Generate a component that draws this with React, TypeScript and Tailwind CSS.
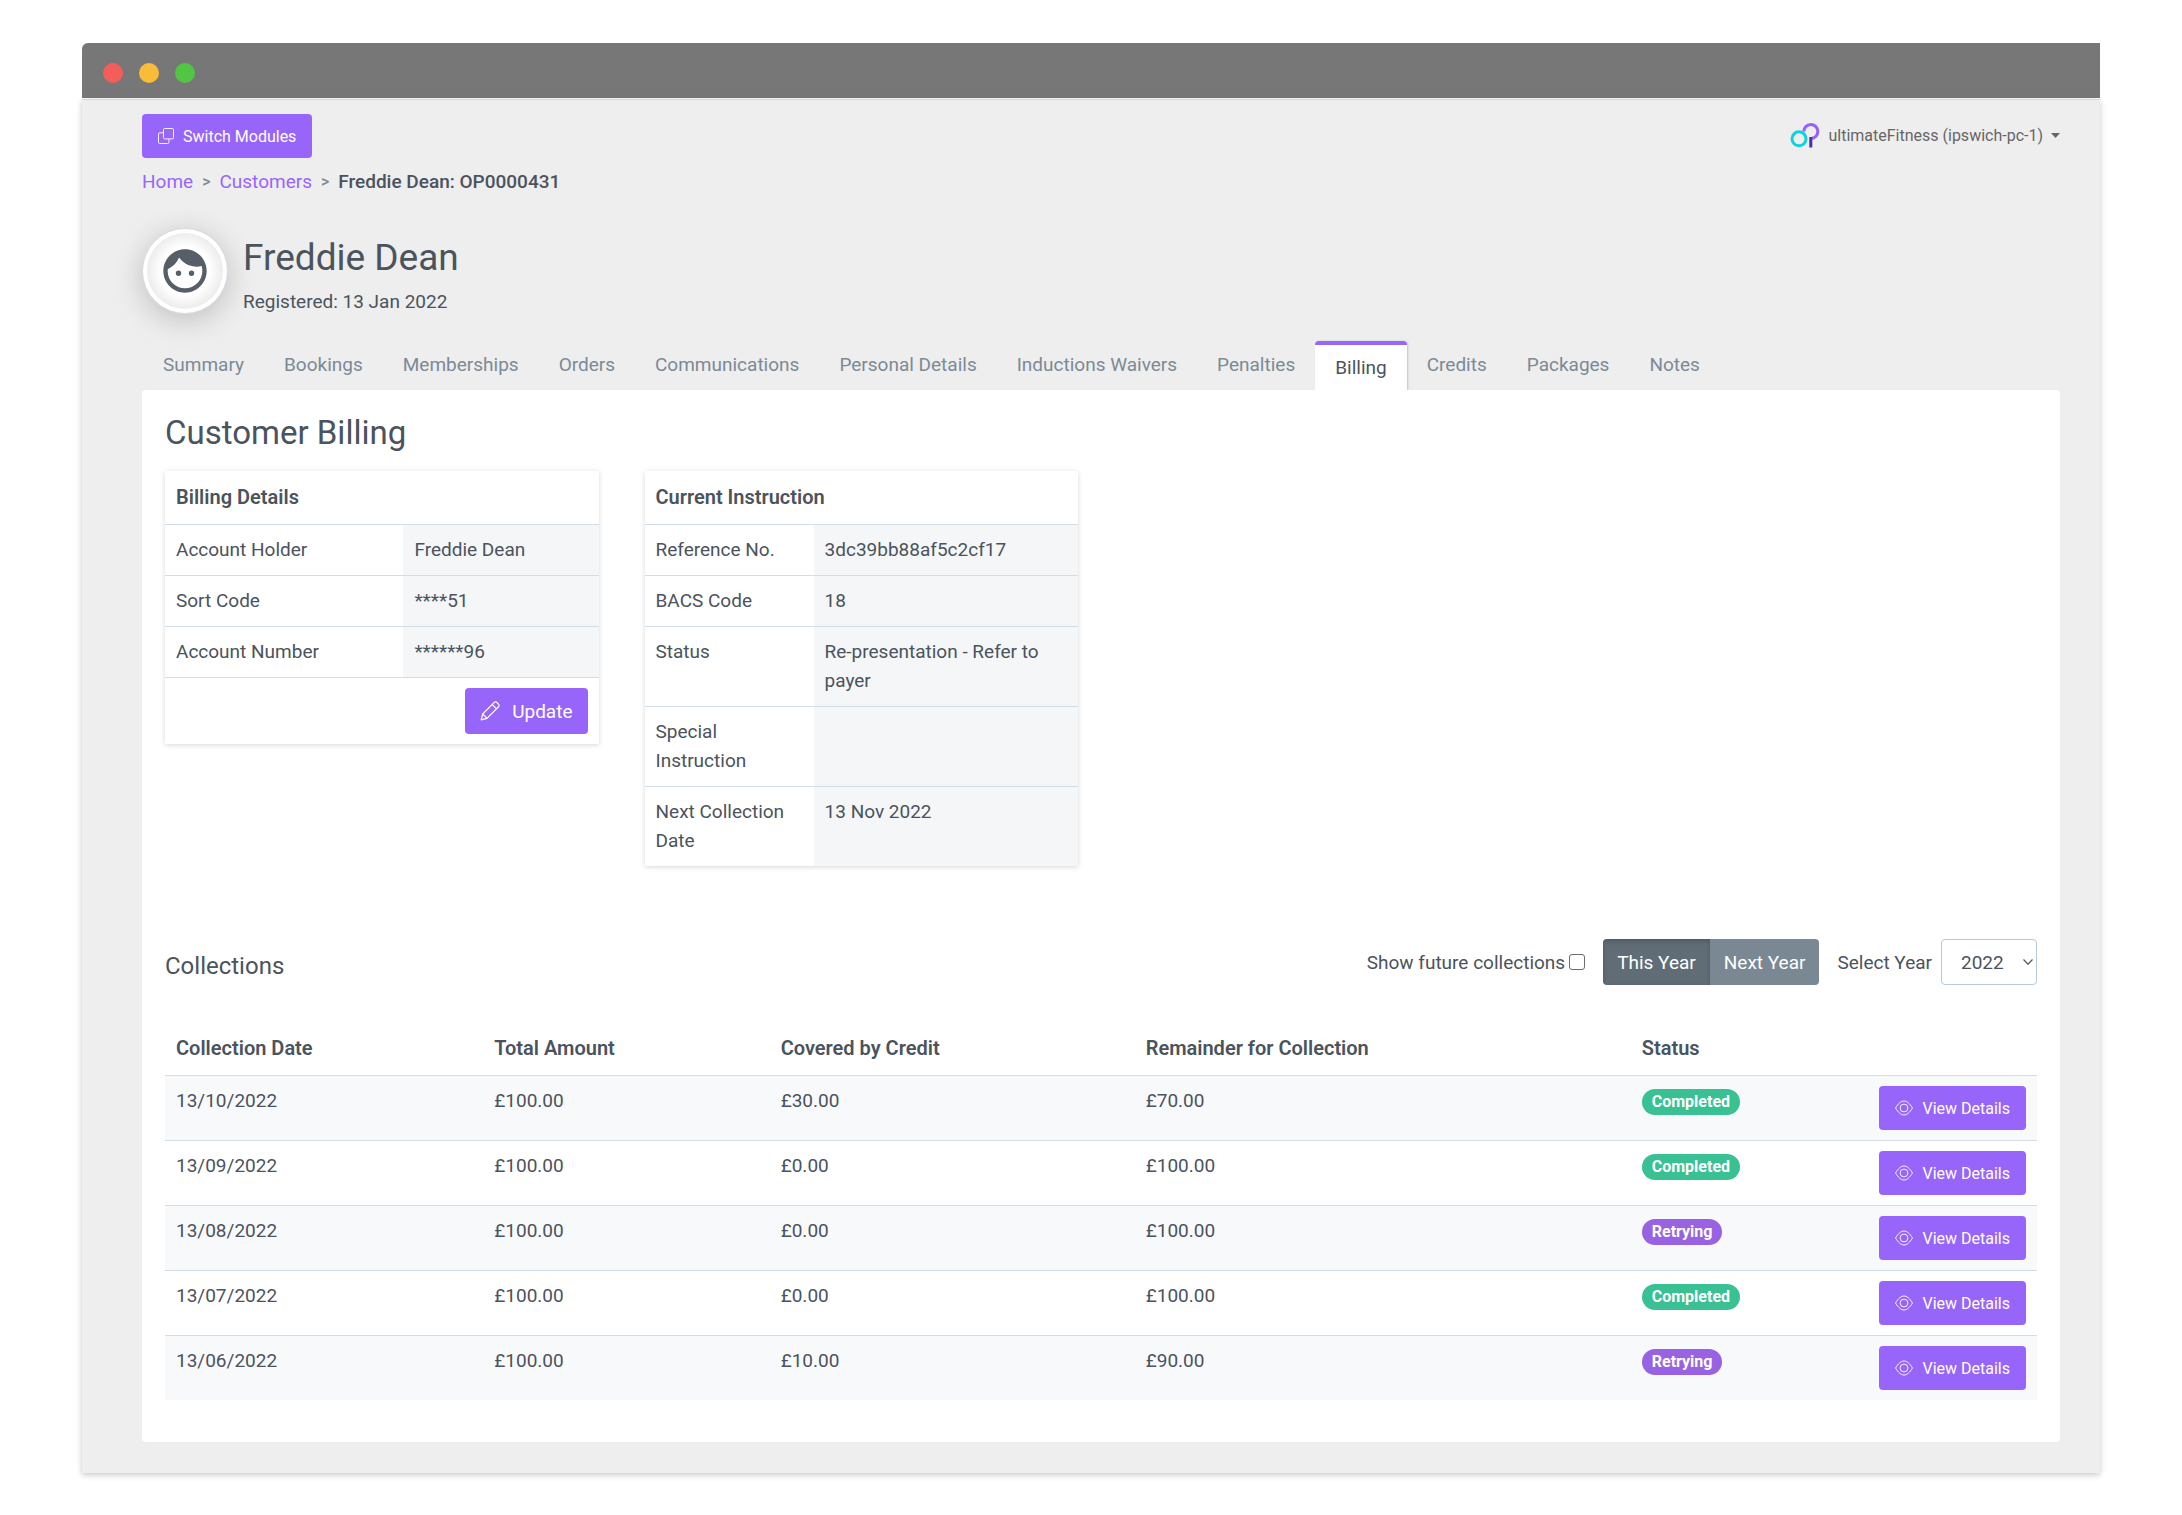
import type { ReactNode } from "react";
import { MdFace } from "react-icons/md";

const tabs = [
  "Summary",
  "Bookings",
  "Memberships",
  "Orders",
  "Communications",
  "Personal Details",
  "Inductions Waivers",
  "Penalties",
  "Billing",
  "Credits",
  "Packages",
  "Notes",
];

const billingDetails = [
  ["Account Holder", "Freddie Dean"],
  ["Sort Code", "****51"],
  ["Account Number", "******96"],
];

const currentInstruction = [
  ["Reference No.", "3dc39bb88af5c2cf17"],
  ["BACS Code", "18"],
  ["Status", "Re-presentation - Refer to payer"],
  ["Special Instruction", ""],
  ["Next Collection Date", "13 Nov 2022"],
];

const collections = [
  { date: "13/10/2022", total: "£100.00", credit: "£30.00", remainder: "£70.00", status: "Completed" },
  { date: "13/09/2022", total: "£100.00", credit: "£0.00", remainder: "£100.00", status: "Completed" },
  { date: "13/08/2022", total: "£100.00", credit: "£0.00", remainder: "£100.00", status: "Retrying" },
  { date: "13/07/2022", total: "£100.00", credit: "£0.00", remainder: "£100.00", status: "Completed" },
  { date: "13/06/2022", total: "£100.00", credit: "£10.00", remainder: "£90.00", status: "Retrying" },
];

function CopyIcon() {
  return (
    <svg viewBox="0 0 16 16" className="size-4" fill="none" stroke="currentColor" strokeWidth="0.9">
      <rect x="5.5" y="0.5" width="10" height="10.4" rx="1.2" />
      <path d="M5.5 4.8H1.7A1.2 1.2 0 0 0 .5 6v8.3a1.2 1.2 0 0 0 1.2 1.2h8a1.2 1.2 0 0 0 1.2-1.2v-3.4" />
    </svg>
  );
}

function PencilIcon() {
  return (
    <svg viewBox="0 0 20 20" className="size-5" fill="none" stroke="currentColor" strokeWidth="1.2" strokeLinejoin="round">
      <path d="M1.2 18.8l1.5-5.8L14 1.7a2.2 2.2 0 0 1 3.1 0l1.2 1.2a2.2 2.2 0 0 1 0 3.1L7 17.3z" />
      <path d="M12.2 3.5l4.3 4.3M2.7 13l4.3 4.3" />
    </svg>
  );
}

function EyeIcon() {
  return (
    <svg viewBox="0 0 18 16" className="h-4 w-[18px]" fill="none" stroke="currentColor" strokeWidth="0.9">
      <path d="M.5 8C3.400 3.400 6 1 9 1s5.600 2.400 8.500 7C14.600 12.600 12 15 9 15S3.400 12.600.5 8z" />
      <circle cx="9" cy="8" r="3.900" />
    </svg>
  );
}

function BrandLogo() {
  return (
    <svg viewBox="0 0 30 25" className="h-[25px] w-[30px]" fill="none">
      <path d="M13.8 8.5a7 7 0 1 1 7.4 7" stroke="#9561fb" strokeWidth="3" />
      <path d="M20.8 14v10.5" stroke="#4a2fa8" strokeWidth="3" />
      <circle cx="9" cy="15.8" r="7" stroke="#0cd3e0" strokeWidth="3" />
    </svg>
  );
}

function DetailTable({
  title,
  rows,
  labelWidth,
  children,
}: {
  title: string;
  rows: string[][];
  labelWidth: string;
  children?: ReactNode;
}) {
  return (
    <table className="w-full table-fixed border-collapse bg-white text-left shadow-[0_1px_5px_rgba(0,0,0,0.16)]">
      <colgroup>
        <col className={labelWidth} />
        <col />
      </colgroup>
      <thead>
        <tr>
          <th colSpan={2} className="px-[11px] py-3 text-[20px] leading-[29px] font-semibold">
            {title}
          </th>
        </tr>
      </thead>
      <tbody>
        {rows.map(([label, value]) => (
          <tr key={label} className="border-t border-[#d3dde6] align-top">
            <th scope="row" className="px-[11px] pt-[10px] pb-[11px] font-normal">
              {label}
            </th>
            <td className="bg-[#f4f6f8] px-[11px] pt-[10px] pb-[11px]">{value}</td>
          </tr>
        ))}
        {children}
      </tbody>
    </table>
  );
}

function StatusBadge({ status }: { status: string }) {
  return (
    <span
      className={`inline-block rounded-full px-[10px] text-[16px] leading-[26px] font-bold text-white ${
        status === "Completed" ? "bg-[#39c093]" : "bg-[#9862e3]"
      }`}
    >
      {status}
    </span>
  );
}

export default function App() {
  return (
    <div className="min-h-screen bg-white px-[82px] pt-[43px] pb-[42px] font-['Roboto','Liberation_Sans',sans-serif] text-[19px] leading-[29px] text-[#4b535d]">
      <div className="flex h-[55px] items-center gap-4 rounded-tl-md bg-[#777] pt-1 pl-[21px]">
        <span className="size-5 rounded-full bg-[#f45e5a]" />
        <span className="size-5 rounded-full bg-[#f9bc39]" />
        <span className="size-5 rounded-full bg-[#51c643]" />
      </div>

      <div className="mt-px border-t border-[#d8d8d8] bg-[#eee] pt-[14px] pr-10 pb-[31px] pl-[60px] shadow-[0_2px_6px_rgba(0,0,0,0.22)]">
        <header className="flex items-start justify-between">
          <button type="button" className="flex h-11 items-center gap-[9px] rounded bg-[#9865fb] px-4 text-[16px] text-white">
            <CopyIcon />
            Switch Modules
          </button>
          <button type="button" className="flex items-center gap-2 pt-[7px] text-[16px] text-[#666]">
            <BrandLogo />
            ultimateFitness (ipswich-pc-1)
            <svg viewBox="0 0 9 5" className="h-[5px] w-[9px]" fill="currentColor">
              <path d="M0 0h9L4.5 5z" />
            </svg>
          </button>
        </header>

        <nav aria-label="Breadcrumb" className="mt-[9px] flex items-center gap-[9px]">
          <a href="#home" className="text-[#9865fb]">Home</a>
          <span className="text-[16px] font-medium text-[#7b8a96]">&gt;</span>
          <a href="#customers" className="text-[#9865fb]">Customers</a>
          <span className="text-[16px] font-medium text-[#7b8a96]">&gt;</span>
          <span className="font-medium">Freddie Dean: OP0000431</span>
        </nav>

        <div className="mt-8 flex items-start gap-[15px]">
          <div className="flex size-[86px] items-center justify-center rounded-full border border-[#d3dde6] bg-white p-1 shadow-[0_6px_30px_rgba(0,0,0,0.2)]">
            <div className="flex size-full items-center justify-center rounded-full bg-radial from-white from-45% to-[#e9e9e9] to-75%">
              <MdFace className="size-[52px] text-[#565e68]" />
            </div>
          </div>
          <div className="pt-2">
            <h1 className="text-[37px] leading-[44px]">Freddie Dean</h1>
            <p className="mt-[7px]">Registered: 13 Jan 2022</p>
          </div>
        </div>

        <nav aria-label="Customer sections" className="mt-[25px] flex h-[49px] items-stretch pl-px">
          {tabs.map((tab) =>
            tab === "Billing" ? (
              <a
                key={tab}
                href="#billing"
                aria-current="page"
                className="rounded-t border-t-4 border-[#9865fb] bg-white px-5 pt-2 shadow-[1px_0_2px_rgba(0,0,0,0.18)]"
              >
                {tab}
              </a>
            ) : (
              <a key={tab} href={`#${tab.toLowerCase().replace(" ", "-")}`} className="px-5 pt-[9px] text-[#7b8a96]">
                {tab}
              </a>
            ),
          )}
        </nav>

        <main className="relative rounded bg-white px-[23px] pt-[23px] pb-[42px]">
          <h2 className="text-[33px] leading-10">Customer Billing</h2>

          <div className="mt-[18px] grid grid-cols-4 items-start gap-x-[46px]">
            <DetailTable title="Billing Details" rows={billingDetails} labelWidth="w-[55%]">
              <tr className="border-t border-[#d3dde6]">
                <td colSpan={2} className="px-[11px] py-[10px]">
                  <button type="button" className="ml-auto flex h-[46px] items-center gap-3 rounded bg-[#9865fb] px-[15px] text-white">
                    <PencilIcon />
                    Update
                  </button>
                </td>
              </tr>
            </DetailTable>
            <DetailTable title="Current Instruction" rows={currentInstruction} labelWidth="w-[39%]" />
          </div>

          <section className="mt-[73px]">
            <div className="flex items-center">
              <h3 className="mr-auto pt-2 text-[24px]">Collections</h3>
              <label className="flex items-center gap-1">
                Show future collections
                <input
                  type="checkbox"
                  className="size-4 appearance-none rounded-[3px] border border-[#6c6c6c] bg-white checked:bg-[#9865fb]"
                />
              </label>
              <div className="ml-[18px] flex h-[46px] overflow-hidden rounded text-white">
                <button type="button" aria-pressed="true" className="bg-[#606d77] px-[14px] shadow-[inset_0_2px_5px_rgba(0,0,0,0.2)]">
                  This Year
                </button>
                <button type="button" aria-pressed="false" className="bg-[#7a8893] px-[14px]">
                  Next Year
                </button>
              </div>
              <label htmlFor="year" className="mr-[9px] ml-[18px]">
                Select Year
              </label>
              <div className="relative">
                <select
                  id="year"
                  defaultValue="2022"
                  className="h-[46px] w-24 appearance-none rounded border border-[#b9c8d5] bg-white pl-[19px]"
                >
                  <option>2022</option>
                  <option>2023</option>
                </select>
                <svg
                  viewBox="0 0 10 6"
                  className="pointer-events-none absolute top-5 right-1 h-[6px] w-[10px]"
                  fill="none"
                  stroke="currentColor"
                  strokeWidth="1.2"
                >
                  <path d="M.5.5L5 5.2 9.5.5" />
                </svg>
              </div>
            </div>

            <table className="mt-[37px] w-full table-fixed border-collapse text-left">
              <thead>
                <tr className="text-[20px]">
                  <th className="w-[17%] px-[11px] py-3 font-semibold">Collection Date</th>
                  <th className="w-[15.3%] px-[11px] py-3 font-semibold">Total Amount</th>
                  <th className="w-[19.5%] px-[11px] py-3 font-semibold">Covered by Credit</th>
                  <th className="w-[26.5%] px-[11px] py-3 font-semibold">Remainder for Collection</th>
                  <th className="px-[11px] py-3 font-semibold">Status</th>
                  <td />
                </tr>
              </thead>
              <tbody>
                {collections.map((row) => (
                  <tr key={row.date} className="border-t border-[#d3dde6] align-top odd:bg-[#f8f9fb]">
                    <td className="px-[11px] py-[10px]">{row.date}</td>
                    <td className="px-[11px] py-[10px]">{row.total}</td>
                    <td className="px-[11px] py-[10px]">{row.credit}</td>
                    <td className="px-[11px] py-[10px]">{row.remainder}</td>
                    <td className="px-[11px] py-[10px]">
                      <StatusBadge status={row.status} />
                    </td>
                    <td className="px-[11px] py-[10px]">
                      <button type="button" className="ml-auto flex h-11 items-center gap-[9px] rounded bg-[#9865fb] px-4 text-[16px] text-white">
                        <EyeIcon />
                        View Details
                      </button>
                    </td>
                  </tr>
                ))}
              </tbody>
            </table>
          </section>
        </main>
      </div>
    </div>
  );
}
